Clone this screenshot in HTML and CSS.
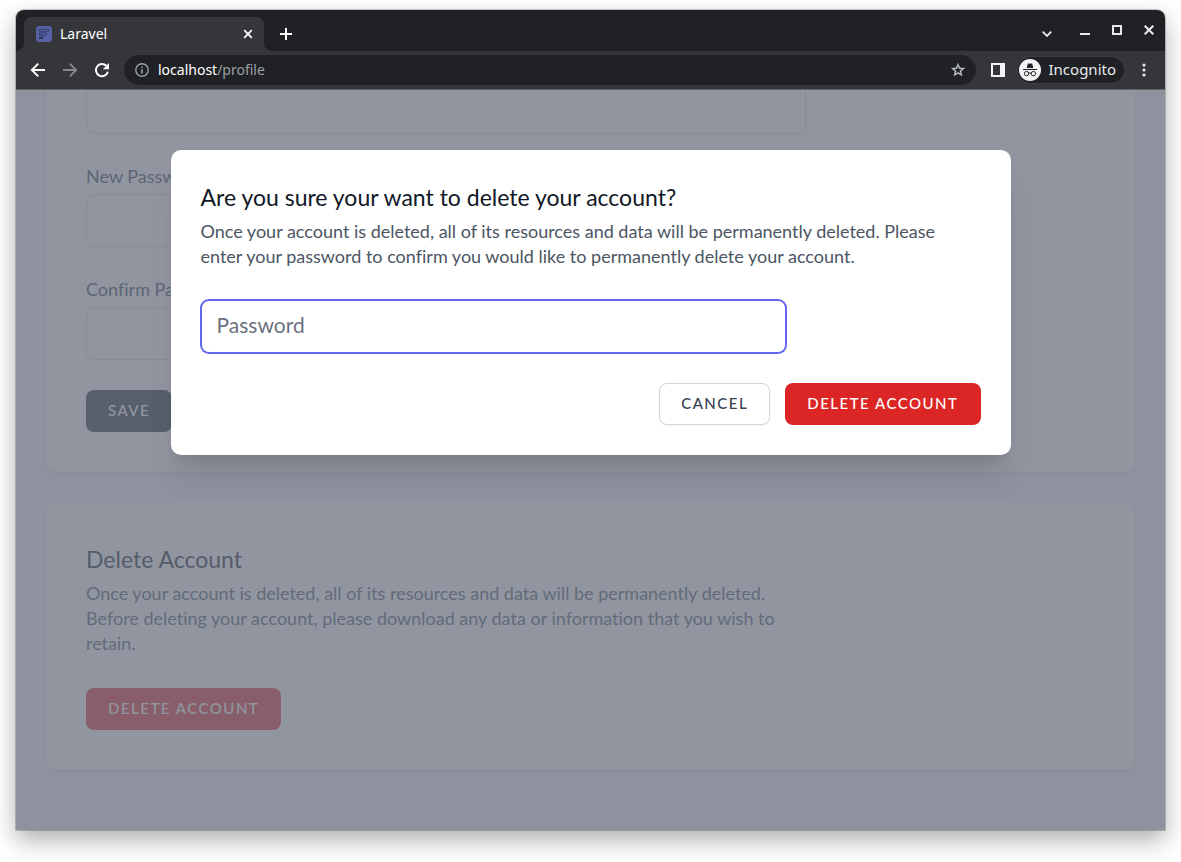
FILE: index.html
```html
<!DOCTYPE html>
<html lang="en">
<head>
<meta charset="utf-8">
<meta name="viewport" content="width=device-width, initial-scale=1">
<title>Laravel</title>
<link rel="stylesheet" href="styles.css">
</head>
<body>
<div class="window">
  <header class="tabstrip">
    <div class="tab">
      <svg class="favicon" viewBox="0 0 16 16" aria-hidden="true">
        <rect width="16" height="16" rx="3" fill="#5661a8"/>
        <g fill="none" stroke="#3a4170" stroke-width="1.1">
          <rect x="3" y="3.2" width="10" height="2" rx="1"/>
          <rect x="3.2" y="6.7" width="7.6" height="2" rx="1"/>
          <path d="M3 10.3h6"/>
        </g>
        <rect x="3" y="11" width="4" height="2" rx="1" fill="#2c3154"/>
      </svg>
      <span class="tab-title">Laravel</span>
      <button class="tab-close" type="button" aria-label="Close tab">
        <svg width="10" height="10" viewBox="0 0 10 10"><path d="M1.2 1.2l7.6 7.6M8.8 1.2L1.2 8.8" stroke="#fff" stroke-width="1.7"/></svg>
      </button>
    </div>
    <button class="icon-btn new-tab" type="button" aria-label="New tab">
      <svg width="12" height="12" viewBox="0 0 12 12"><path d="M6 0v12M0 6h12" stroke="#fff" stroke-width="2"/></svg>
    </button>
    <div class="window-controls">
      <button class="icon-btn tab-search" type="button" aria-label="Search tabs">
        <svg width="10" height="6" viewBox="0 0 10 6"><path d="M.7.7L5 5 9.3.7" fill="none" stroke="#e8eaed" stroke-width="1.8"/></svg>
      </button>
      <button class="icon-btn" type="button" aria-label="Minimize">
        <svg width="10" height="10" viewBox="0 0 10 10"><path d="M0 9h10" stroke="#e8eaed" stroke-width="2"/></svg>
      </button>
      <button class="icon-btn" type="button" aria-label="Maximize">
        <svg width="10" height="10" viewBox="0 0 10 10"><rect x="1" y="1" width="8" height="8" fill="none" stroke="#e8eaed" stroke-width="2"/></svg>
      </button>
      <button class="icon-btn" type="button" aria-label="Close">
        <svg width="10" height="10" viewBox="0 0 10 10"><path d="M.7.7l8.6 8.6M9.3.7L.7 9.3" stroke="#e8eaed" stroke-width="2"/></svg>
      </button>
    </div>
  </header>

  <nav class="toolbar" aria-label="Browser toolbar">
    <button class="icon-btn" type="button" aria-label="Back">
      <svg width="16" height="16" viewBox="0 0 16 16"><path d="M15 8H2.2M8.2 1.6L1.8 8l6.4 6.4" fill="none" stroke="#fff" stroke-width="1.9"/></svg>
    </button>
    <button class="icon-btn" type="button" aria-label="Forward">
      <svg width="16" height="16" viewBox="0 0 16 16"><path d="M1 8h12.8M7.8 1.6L14.2 8l-6.4 6.4" fill="none" stroke="#87898c" stroke-width="1.8"/></svg>
    </button>
    <button class="icon-btn" type="button" aria-label="Reload">
      <svg width="16" height="16" viewBox="0 0 16 16"><path d="M13.9 9.8A6.1 6.1 0 1 1 12.4 3.8" fill="none" stroke="#fff" stroke-width="2"/><path d="M15 1v6.2H8.8z" fill="#fff"/></svg>
    </button>
    <div class="omnibox">
      <svg width="14" height="14" viewBox="0 0 14 14" aria-hidden="true"><circle cx="7" cy="7" r="6.2" fill="none" stroke="#9aa0a6" stroke-width="1.4"/><path d="M7 6.2v4.4M7 3.4v1.7" stroke="#9aa0a6" stroke-width="1.6"/></svg>
      <div class="url" role="textbox" aria-label="Address" contenteditable="true" spellcheck="false"><span class="url-host">localhost</span>/profile</div>
      <button class="star" type="button" aria-label="Bookmark this page">
        <svg width="16" height="16" viewBox="0 0 24 24"><path d="M22 9.24l-7.19-.62L12 2 9.19 8.63 2 9.24l5.46 4.73L5.82 21 12 17.27 18.18 21l-1.63-7.03L22 9.24zM12 15.4l-3.76 2.27 1-4.28-3.32-2.88 4.38-.38L12 6.1l1.71 4.04 4.38.38-3.32 2.88 1 4.28L12 15.4z" fill="#c4c7cb" stroke="#c4c7cb" stroke-width=".5"/></svg>
      </button>
    </div>
    <button class="icon-btn side-panel" type="button" aria-label="Side panel">
      <svg width="14" height="14" viewBox="0 0 14 14"><path d="M0 0h14v14H0zM2 2v10h7V2z" fill="#f1f3f4" fill-rule="evenodd"/></svg>
    </button>
    <button class="incognito" type="button">
      <svg width="22" height="22" viewBox="0 0 22 22" aria-hidden="true">
        <circle cx="11" cy="11" r="11" fill="#f1f3f4"/>
        <path d="M7.7 8.9l1-4q.2-.7.9-.5l1.4.4 1.4-.4q.7-.2.9.5l1 4z" fill="#202124"/>
        <path d="M4 10.5h14" stroke="#202124" stroke-width="1"/>
        <g fill="none" stroke="#202124" stroke-width="1"><circle cx="7.6" cy="14.6" r="2.2"/><circle cx="14.4" cy="14.6" r="2.2"/><path d="M9.8 14.3q1.2-.7 2.4 0"/></g>
      </svg>
      <span class="incognito-text">Incognito</span>
    </button>
    <button class="icon-btn menu" type="button" aria-label="Menu">
      <svg width="4" height="14" viewBox="0 0 4 14"><g fill="#e8eaed"><circle cx="2" cy="2" r="1.6"/><circle cx="2" cy="7" r="1.6"/><circle cx="2" cy="12" r="1.6"/></g></svg>
    </button>
  </nav>

  <div class="viewport">
    <main class="page">
      <section class="card">
        <form class="narrow">
          <input class="field" type="password" aria-label="Current Password">
          <label class="label" for="new-password">New Password</label>
          <input class="field" id="new-password" type="password">
          <label class="label" for="confirm-password">Confirm Password</label>
          <input class="field" id="confirm-password" type="password">
          <button class="btn btn-dark form-action" type="button">Save</button>
        </form>
      </section>
      <section class="card">
        <div class="narrow">
          <h2 class="heading">Delete Account</h2>
          <p class="copy">Once your account is deleted, all of its resources and data will be permanently deleted. Before deleting your account, please download any data or information that you wish to retain.</p>
          <button class="btn btn-danger section-action" type="button">Delete Account</button>
        </div>
      </section>
    </main>
    <div class="overlay">
      <form class="dialog" role="dialog" aria-modal="true" aria-labelledby="dialog-title">
        <h2 class="heading" id="dialog-title">Are you sure your want to delete your account?</h2>
        <p class="copy">Once your account is deleted, all of its resources and data will be permanently deleted. Please enter your password to confirm you would like to permanently delete your account.</p>
        <input class="field field-active" type="password" placeholder="Password" aria-label="Password">
        <div class="actions">
          <button class="btn btn-light" type="button">Cancel</button>
          <button class="btn btn-danger" type="button">Delete Account</button>
        </div>
      </form>
    </div>
  </div>
</div>
</body>
</html>
```
FILE: styles.css
```css
* { box-sizing: border-box; }

body {
  margin: 0;
  min-height: 100vh;
  display: flex;
  padding: 10px 16px 32px;
  background: #fff;
  font-family: Lato, "Open Sans", sans-serif;
  font-variant-ligatures: none;
}

button { border: 0; background: none; padding: 0; font: inherit; color: inherit; }
h2, p { margin: 0; }
svg { display: block; flex: none; }

.window {
  flex: 1;
  min-width: 0;
  display: flex;
  flex-direction: column;
  border-radius: 8px 8px 0 0;
  box-shadow: 0 0 0 1px rgba(0, 0, 0, .2), 0 10px 24px rgba(0, 0, 0, .33);
}

/* Browser chrome */
.tabstrip, .toolbar {
  display: flex;
  align-items: center;
  color: #fff;
  font-family: "Noto Sans", "Open Sans", sans-serif;
  font-size: 14px;
}

.tabstrip {
  height: 41px;
  padding-left: 8px;
  background: #202124;
  border-radius: 8px 8px 0 0;
}

.tab {
  position: relative;
  align-self: flex-end;
  display: flex;
  align-items: center;
  gap: 8px;
  width: 240px;
  height: 34px;
  padding: 0 11px 0 12px;
  background: #35363a;
  border-radius: 8px 8px 0 0;
}

.tab::before, .tab::after {
  content: "";
  position: absolute;
  bottom: 0;
  width: 8px;
  height: 8px;
}
.tab::before { right: 100%; background: radial-gradient(circle at 0 0, transparent 8px, #35363a 8px); }
.tab::after { left: 100%; background: radial-gradient(circle at 100% 0, transparent 8px, #35363a 8px); }

.favicon { width: 16px; height: 16px; }
.tab-title { flex: 1; }
.tab-title, .url, .incognito-text { padding-bottom: 2px; }

.icon-btn {
  display: flex;
  align-items: center;
  justify-content: center;
  width: 32px;
  height: 32px;
}

.new-tab { width: 28px; margin: 7px 0 0 8px; }
.window-controls { display: flex; margin: 2px 0 0 auto; }
.tab-search { margin: 4px 6px 0 0; }

.toolbar {
  height: 39px;
  padding: 0 5px 0 6px;
  background: #35363a;
  border-bottom: 1px solid #626269;
}

.omnibox {
  flex: 1;
  display: flex;
  align-items: center;
  gap: 9px;
  height: 30px;
  margin: 0 6px;
  padding: 0 10px 0 11px;
  border-radius: 15px;
  background: #202124;
}
.url { flex: 1; color: #9aa0a6; outline: none; }
.url-host { color: #fff; }

.incognito {
  display: flex;
  align-items: center;
  gap: 8px;
  height: 26px;
  margin: 0 4px;
  padding: 0 8px 0 1px;
  border-radius: 13px;
  background: #202124;
  box-shadow: 0 0 0 1px #3c3d41;
  font-size: 15px;
  color: #e8eaed;
}

/* Page */
.viewport {
  position: relative;
  flex: 1;
  min-height: 0;
  display: flex;
  overflow: hidden;
  background: #f3f4f6;
}

.page {
  flex: 1;
  height: 0;
  min-height: 100%;
  display: flex;
  flex-direction: column;
  justify-content: flex-end;
  gap: 30px;
  padding: 0 30px 60px;
}

.card {
  flex: none;
  padding: 40px;
  border-radius: 10px;
  background: #fff;
  box-shadow: 0 1px 3px rgba(0, 0, 0, .12);
}

.narrow { max-width: 720px; }

.label {
  display: block;
  margin: 30px 0 5px;
  font-size: 18px;
  line-height: 25px;
  color: #374151;
}

.field {
  display: block;
  width: 100%;
  height: 53px;
  padding: 0 15px 4px;
  border: 1px solid #d1d5db;
  border-radius: 8px;
  background: #fff;
  font: inherit;
  font-size: 21px;
  color: #111827;
  outline: none;
}
.field::placeholder { color: #6b7280; opacity: 1; }

.field-active {
  width: 75%;
  margin-top: 31px;
  border-color: #6366f1;
  box-shadow: 0 0 0 1px #6366f1;
}

.heading {
  font-size: 23px;
  font-weight: 400;
  line-height: 35px;
  color: #111827;
}

.copy {
  margin-top: 4px;
  font-size: 18px;
  line-height: 25px;
  color: #4b5563;
}

.btn {
  height: 42px;
  padding: 0 21px 2px;
  border: 1px solid transparent;
  border-radius: 8px;
  font-size: 15px;
  font-weight: 500;
  line-height: 20px;
  letter-spacing: .1em;
  text-transform: uppercase;
}
.btn-dark { background: #1f2937; color: #fff; }
.btn-danger { background: #dc2626; color: #fff; }
.btn-light {
  background: #fff;
  border-color: #d1d5db;
  color: #374151;
  box-shadow: 0 1px 2px rgba(0, 0, 0, .05);
}
.form-action { margin-top: 30px; display: block; }
.section-action { margin-top: 32px; display: block; }

.overlay {
  position: absolute;
  inset: 0;
  padding: 60px 30px;
  background: rgba(107, 114, 128, .75);
}

.dialog {
  max-width: 840px;
  margin: 0 auto;
  padding: 30px;
  border-radius: 10px;
  background: #fff;
  box-shadow: 0 25px 31px -6px rgba(0, 0, 0, .1), 0 10px 12px -7px rgba(0, 0, 0, .1);
}

.actions {
  display: flex;
  justify-content: flex-end;
  gap: 15px;
  margin-top: 30px;
}
```
